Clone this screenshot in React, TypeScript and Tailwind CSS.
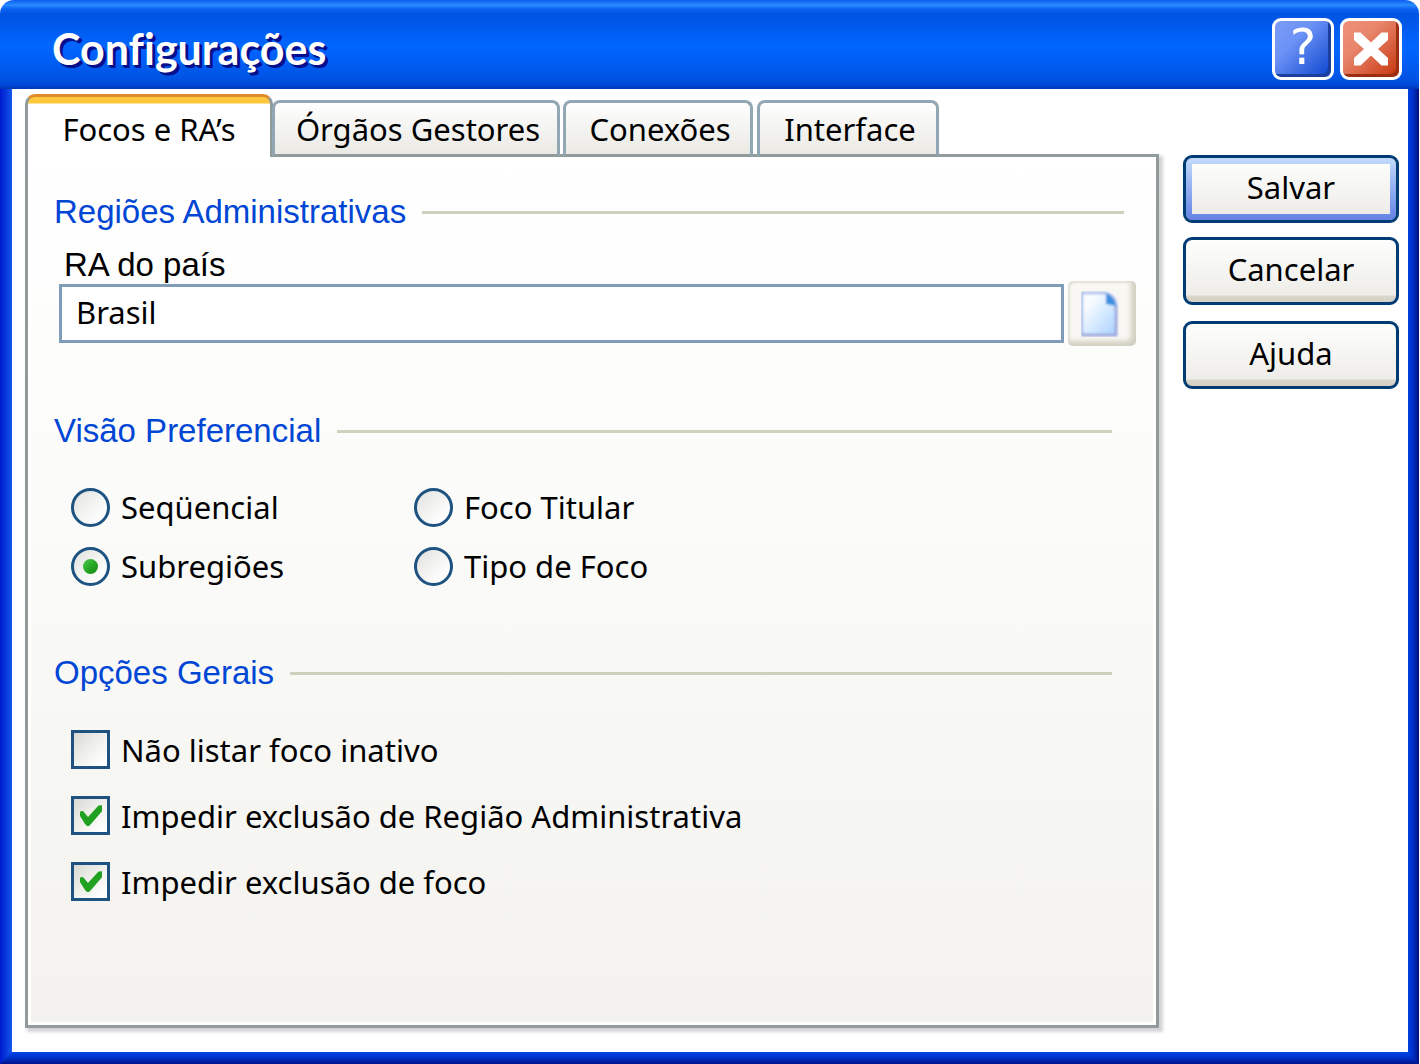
import { useState } from "react";
import type { ReactNode } from "react";

const TABS = [
  { name: "Focos e RA’s", place: "w-[248px]" },
  { name: "Órgãos Gestores", place: "-ml-px w-[288px]" },
  { name: "Conexões", place: "ml-[3px] w-[190px]" },
  { name: "Interface", place: "ml-1 w-[182px]" },
];

function TitleBar() {
  return (
    <header className="flex h-[89px] items-center justify-between rounded-t-[14px] bg-[linear-gradient(180deg,#0a5cf0_0px,#2b8cff_5px,#0a62f2_9px,#0054e3_14px,#0058ea_24px,#0066ff_46px,#0062fb_54px,#0054e4_78px,#0048d8_85px,#0038b8_89px)] pr-[17px] pl-[52px]">
      <h1 className="pt-2 font-['Lato',sans-serif] text-[43px] leading-[56px] font-bold text-white [font-variant-ligatures:none] [text-shadow:2px_2px_0_#06108c,3px_3px_0_#06108c]">
        Configurações
      </h1>
      <div className="flex gap-[6px] pt-2">
        <button
          type="button"
          aria-label="Ajuda da janela"
          className="flex size-[62px] items-center justify-center rounded-[9px] border-[3px] border-white bg-[linear-gradient(135deg,#7b9cf8_0%,#6c92f5_35%,#2f62dd_75%,#0a44d0_100%)] pb-1 font-['DejaVu_Sans',sans-serif] text-[50px] leading-[50px] text-white shadow-[inset_-3px_-3px_0_#1c3f9e]"
        >
          ?
        </button>
        <button
          type="button"
          aria-label="Fechar"
          className="flex size-[62px] items-center justify-center rounded-[9px] border-[3px] border-white bg-[linear-gradient(135deg,#ee907a_0%,#e8866c_35%,#d65a38_70%,#c43408_100%)] shadow-[inset_-3px_-3px_0_#9c2f12]"
        >
          <svg viewBox="0 0 34 34" className="size-[34px]" fill="#fff" aria-hidden="true">
            <path d="M0 .5h6.500L17 10.500 27.500.5H34V8l-10 9 10 9v7.500h-6.500L17 23.500 6.500 33.500H0V26l10-9L0 8z" />
          </svg>
        </button>
      </div>
    </header>
  );
}

function Section({ title, className, children }: { title: string; className: string; children: ReactNode }) {
  return (
    <section aria-label={title}>
      <div className={`flex items-center gap-4 ${className}`}>
        <h2 className="font-['Liberation_Sans',Arial,sans-serif] text-[33px] leading-10 text-[#0046d5]">{title}</h2>
        <div className="h-[3px] flex-1 bg-[#d0d0bf]" />
      </div>
      {children}
    </section>
  );
}

function Radio({ label, checked, onPick }: { label: string; checked: boolean; onPick: () => void }) {
  return (
    <label className="flex h-[38px] items-center gap-[11px]">
      <span className="grid size-[39px] place-items-center">
        <input
          type="radio"
          name="visao"
          checked={checked}
          onChange={onPick}
          className="peer col-start-1 row-start-1 size-[39px] appearance-none rounded-full border-[3px] border-[#1d5281] bg-[linear-gradient(135deg,#e6e6e4_15%,#f4f4f3_50%,#ffffff_85%)]"
        />
        <span className="pointer-events-none col-start-1 row-start-1 hidden size-[15px] rounded-full bg-[linear-gradient(135deg,#4cc84a,#21a121_60%,#188a18)] peer-checked:block" />
      </span>
      {label}
    </label>
  );
}

function Check({ label, initial }: { label: string; initial: boolean }) {
  return (
    <label className="flex h-[39px] items-center gap-[11px]">
      <span className="grid size-[39px] place-items-center">
        <input
          type="checkbox"
          defaultChecked={initial}
          className="peer col-start-1 row-start-1 size-[39px] appearance-none border-[3px] border-[#1d5281] bg-[linear-gradient(135deg,#dcdcd7_5%,#f0f0ed_50%,#ffffff_90%)]"
        />
        <svg
          viewBox="0 0 22 21"
          className="pointer-events-none col-start-1 row-start-1 hidden h-[21px] w-[22px] peer-checked:block"
          fill="#21a121"
          aria-hidden="true"
        >
          <path d="M0 6.500 3 6l5 6L18.500.5 22 .3v6L11 19l-2 2H7l-2-2-5-8z" />
        </svg>
      </span>
      {label}
    </label>
  );
}

function ActionButton({ label, primary, className }: { label: string; primary?: boolean; className: string }) {
  return (
    <button
      type="button"
      className={`h-[68px] w-full rounded-[9px] border-[3px] border-[#003c74] ${
        primary
          ? "bg-[linear-gradient(180deg,#fdfdfc,#edece7),linear-gradient(180deg,#c2dbfc,#6382e4)] bg-no-repeat [background-clip:content-box,padding-box] [background-origin:content-box,padding-box] p-[6px]"
          : "bg-[linear-gradient(180deg,#fefefd,#eeede9_88%,#d9d6cb_91%,#d6d0c5)] pb-1"
      } ${className}`}
    >
      <span className={primary ? "block pb-1" : ""}>{label}</span>
    </button>
  );
}

export default function App() {
  const [tab, setTab] = useState(0);
  const [view, setView] = useState("Subregiões");

  return (
    <div className="flex min-h-screen flex-col bg-white pr-px font-['Noto_Sans',sans-serif] text-[31px] leading-10 text-black">
      <TitleBar />
      <div className="grid flex-1 grid-cols-[12px_1fr_11px] grid-rows-[1fr_12px]">
        <div className="col-start-1 row-span-2 row-start-1 bg-[linear-gradient(90deg,#0019cf,#0838dc_50%,#1658ec)]" />
        <div className="col-start-3 row-span-2 row-start-1 bg-[linear-gradient(90deg,#0040e0,#0030c8_45%,#001a90_85%,#00106c)]" />
        <div className="col-span-3 col-start-1 row-start-2 bg-[linear-gradient(180deg,#0046e6,#0030c8_50%,#00138c)] [clip-path:polygon(12px_0,calc(100%-11px)_0,100%_100%,0_100%)]" />

        <main className="col-start-2 row-start-1 flex gap-6 pt-[5px] pr-[9px] pb-6 pl-[13px]">
          <div className="flex min-w-0 flex-1 flex-col">
            <div role="tablist" className="z-10 -mb-[3px] flex h-[63px] items-end">
              {TABS.map((t, i) => (
                <button
                  key={t.name}
                  type="button"
                  role="tab"
                  aria-selected={tab === i}
                  onClick={() => setTab(i)}
                  className={`${t.place} ${
                    tab === i
                      ? "h-[63px] overflow-hidden rounded-t-[10px] border-x-[3px] border-t-[3px] border-x-[#919b9c] border-t-[#e08c2c] bg-[linear-gradient(180deg,#ffc73c_6px,#ffffff_7px)] pt-1"
                      : "h-[57px] rounded-t-[8px] border-[3px] border-[#91a7b4] border-b-[#919b9c] bg-[linear-gradient(180deg,#fefefe,#eae9e4)] pt-px pl-1"
                  }`}
                >
                  {t.name}
                </button>
              ))}
            </div>

            <div
              role="tabpanel"
              className="flex-1 border-[3px] border-[#919b9c] bg-white p-[3px] shadow-[3px_3px_3px_1px_#d4d4d4]"
            >
              <div className="h-full bg-[linear-gradient(180deg,#ffffff,#fbfbf9_40%,#f3f2ee)] pt-8 pr-[17px] pl-[23px]">
                <Section title="Regiões Administrativas" className="pr-3">
                  <label htmlFor="ra" className="mt-[13px] block pl-[10px] font-['Liberation_Sans',Arial,sans-serif] text-[33px]">
                    RA do país
                  </label>
                  <div className="-mt-1 flex gap-1 pl-[5px]">
                    <input
                      id="ra"
                      type="text"
                      defaultValue="Brasil"
                      className="mt-[3px] h-[59px] min-w-0 flex-1 border-[3px] border-[#7f9db9] bg-white px-[14px] pb-1 outline-none"
                    />
                    <button
                      type="button"
                      aria-label="Novo"
                      className="flex h-[65px] w-[68px] items-center justify-center rounded-[5px] bg-[#f8f7f3] pr-1 shadow-[inset_-5px_-5px_5px_#d3d0c3,inset_2px_2px_2px_#e2e0d6]"
                    >
                      <svg viewBox="0 0 38 46" className="h-[46px] w-[38px]" aria-hidden="true">
                        <defs>
                          <linearGradient id="page" x1="0" y1="0" x2="1" y2="1">
                            <stop offset="0.2" stopColor="#fafdff" />
                            <stop offset="1" stopColor="#a9d2ff" />
                          </linearGradient>
                          <filter id="soft">
                            <feGaussianBlur stdDeviation="1" />
                          </filter>
                        </defs>
                        <g filter="url(#soft)">
                          <path d="M1 2h23q11 3 11 13v29H1z" fill="url(#page)" stroke="#a9bdec" strokeWidth="2.500" />
                          <path d="M35 14v30H1" fill="none" stroke="#9aa4dc" strokeWidth="2.500" />
                          <path d="M25 2v11l10 2q-1-9-10-13z" fill="#3c8fe0" />
                        </g>
                      </svg>
                    </button>
                  </div>
                </Section>

                <div className="h-[65px]" />
                <Section title="Visão Preferencial" className="pr-6">
                  <div className="mt-[37px] grid grid-cols-[343px_1fr] gap-y-[21px] pl-[17px]">
                    {["Seqüencial", "Foco Titular", "Subregiões", "Tipo de Foco"].map((v) => (
                      <Radio key={v} label={v} checked={view === v} onPick={() => setView(v)} />
                    ))}
                  </div>
                </Section>

                <div className="h-[68px]" />
                <Section title="Opções Gerais" className="pr-6">
                  <div className="mt-[37px] flex flex-col items-start gap-[27px] pl-[17px]">
                    <Check label="Não listar foco inativo" initial={false} />
                    <Check label="Impedir exclusão de Região Administrativa" initial />
                    <Check label="Impedir exclusão de foco" initial />
                  </div>
                </Section>
              </div>
            </div>
          </div>

          <div className="w-[216px] shrink-0 pt-[61px]">
            <ActionButton label="Salvar" primary className="" />
            <ActionButton label="Cancelar" className="mt-[14px]" />
            <ActionButton label="Ajuda" className="mt-4" />
          </div>
        </main>
      </div>
    </div>
  );
}
